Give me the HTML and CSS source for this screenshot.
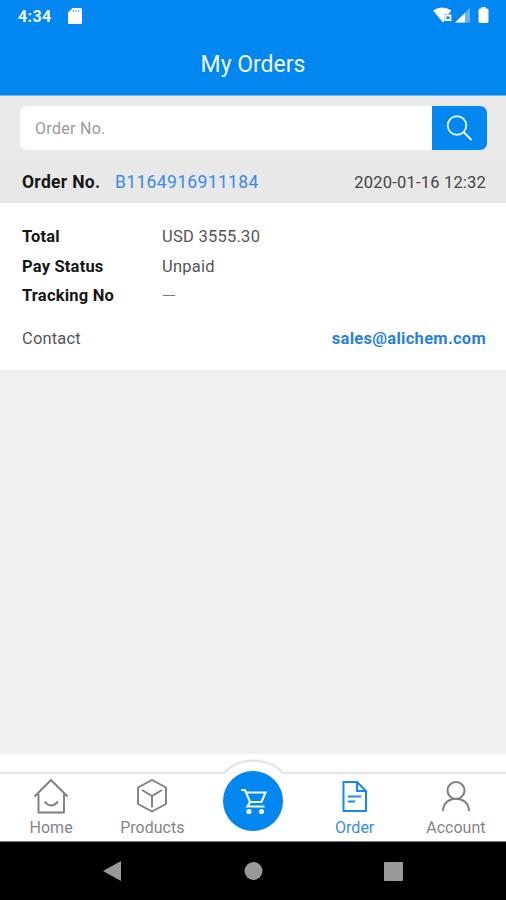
FILE: index.html
```
<!DOCTYPE html>
<html lang="en">
<head>
<meta charset="utf-8">
<title>My Orders</title>
<link rel="stylesheet" href="styles.css">
</head>
<body>
<div class="app">
  <header class="header">
    <div class="status">
      <span class="time">4:34</span>
      <svg class="sd" width="14" height="16" viewBox="0 0 14 16"><path d="M4.5 0H12.5Q14 0 14 1.5V14.5Q14 16 12.500 16H1.500Q0 16 0 14.500V4.500Z" fill="#fff"/><path d="M5.500 2V4M8 2V4M10.500 2V4" stroke="#58aef5" stroke-width="1.200"/></svg>
      <svg class="signals" width="58" height="18" viewBox="0 0 58 18"><path d="M0 3.500Q9-2.500 18.500 3.500L15 7.500H11.500V14L10 15.500Z" fill="#fff"/><path d="M12.500 8V13H17.500M13.500 8.500H17.500V14" fill="none" stroke="#fff" stroke-width="1.800"/><path d="M22 15.500L37 1V15.500Z" fill="#61b4f7"/><path d="M22 15.500L32 6V15.500Z" fill="#fff"/><path d="M48.500 0H52.500V1.500H54Q55.500 1.500 55.500 3V14.500Q55.500 16 54 16H47Q45.500 16 45.500 14.500V3Q45.500 1.500 47 1.500H48.500Z" fill="#fff"/></svg>
    </div>
    <h1 class="title">My Orders</h1>
  </header>
  <div class="search">
    <div class="field">Order No.</div>
    <button class="go" aria-label="Search"><svg width="28" height="28" viewBox="0 0 28 28" fill="none" stroke="#e4f4ff" stroke-width="1.900"><circle cx="11" cy="11.500" r="9.300"/><path d="M17.500 18L25.500 26"/></svg></button>
  </div>
  <div class="order-bar">
    <b class="label">Order No.</b><span class="number">B1164916911184</span><span class="date">2020-01-16 12:32</span>
  </div>
  <section class="details">
    <div class="row"><b>Total</b><span class="total">USD 3555.30</span></div>
    <div class="row"><b>Pay Status</b><span>Unpaid</span></div>
    <div class="row"><b>Tracking No</b><i class="dash"></i></div>
    <div class="contact"><span>Contact</span><b class="mail">sales@alichem.com</b></div>
  </section>
  <main class="empty"></main>
  <nav class="tabs">
    <svg class="edge" width="506" height="24" viewBox="0 0 506 24"><path d="M0 19H224C239 2.500 268 2.500 283 19H506" fill="none" stroke="#e5e5e5" stroke-width="2.500"/></svg>
    <div class="tab"><svg width="36" height="36" viewBox="0 0 36 36" fill="none" stroke="#7f7f7f" stroke-width="1.900" stroke-linejoin="round"><path d="M1.500 18.500L18 2L34.500 18.500M5.500 16V34.500H31V16"/><path d="M11.500 23.500Q18 31.500 25 23.500"/></svg><span>Home</span></div>
    <div class="tab"><svg width="36" height="36" viewBox="0 0 36 36" fill="none" stroke="#7f7f7f" stroke-width="1.900" stroke-linejoin="round"><path d="M18 2L32 9.500V26L18 33.500L4 26V9.500Z"/><path d="M8 12L18 18L28 12M18 18V29.500"/></svg><span>Products</span></div>
    <div class="tab"><div class="cart"><svg width="28" height="28" viewBox="0 0 28 28" fill="none" stroke="#f1faff" stroke-width="2.200"><path d="M2 3H6L11 15H22.500L26.500 5.500H7.500M11 15L8.500 19.500H25.500"/><circle cx="10" cy="24.500" r="2.600" fill="#f1faff" stroke="none"/><circle cx="22.500" cy="24.500" r="2.600" fill="#f1faff" stroke="none"/></svg></div></div>
    <div class="tab active"><svg width="36" height="36" viewBox="0 0 36 36" fill="none" stroke="#1688ee" stroke-width="2" stroke-linejoin="round"><path d="M6.500 4H20L29 13V33H6.500Z"/><path d="M20 4V13H29M11 18.500H24M11 23.500H18"/></svg><span>Order</span></div>
    <div class="tab"><svg width="36" height="36" viewBox="0 0 36 36" fill="none" stroke="#7f7f7f" stroke-width="2"><circle cx="18" cy="12.500" r="8.500"/><path d="M5 33C5 16.500 31 16.500 31 33"/></svg><span>Account</span></div>
  </nav>
  <footer class="system">
    <svg width="506" height="58" viewBox="0 0 506 58" fill="#999"><path d="M103 29L121 19V39Z"/><circle cx="253.500" cy="29" r="9"/><rect x="384" y="20" width="19" height="19" rx="1"/></svg>
  </footer>
</div>
</body>
</html>
```
FILE: styles.css
```
* { box-sizing: border-box; }
body { margin: 0; font-family: Roboto, "Liberation Sans", sans-serif; font-size: 16px; color: #444; }
.app { width: 506px; height: 900px; display: flex; flex-direction: column; background: #f0f0f0; overflow: hidden; }
.header { height: 96px; flex: none; background: #0286f0; border-bottom: 1px solid #69b7f5; color: #fff; }
.status { height: 32px; display: flex; align-items: center; padding: 0 15px 0 18px; }
.time { font-size: 16px; font-weight: 700; width: 50px; color: #f0faff; letter-spacing: .4px; }
.signals { margin-left: auto; }
.title { margin: 16px 0 0; text-align: center; font-size: 23px; line-height: 34px; font-weight: 400; color: #edf9ff; }
.search { height: 66px; flex: none; display: flex; padding: 10px 19px 12px 20px; background: #eae9e9; }
.field { flex: 1; background: #fff; border-radius: 7px 0 0 7px; padding-left: 15px; line-height: 45px; color: #999; letter-spacing: .3px; }
.go { width: 55px; border: 0; padding: 0; background: #0286f0; border-radius: 0 7px 7px 0; display: flex; align-items: center; justify-content: center; }
.order-bar { height: 41px; flex: none; background: #e8e8e8; display: flex; align-items: center; padding: 0 20px 2px 22px; }
.label { width: 93px; color: #161616; font-size: 17.500px; letter-spacing: .3px; }
.number { color: #398bea; font-size: 17.500px; letter-spacing: .35px; }
.date { margin-left: auto; margin-top: 1px; color: #444; font-size: 16.500px; letter-spacing: .2px; }
.details { height: 167px; flex: none; background: #fff; padding: 19px 20px 0 22px; }
.row { height: 29.500px; display: flex; align-items: center; }
.row b { width: 140px; color: #161616; font-size: 16.500px; letter-spacing: .2px; }
.row span { color: #555; font-size: 16.500px; letter-spacing: .25px; }
.dash { width: 12px; height: 1px; margin-left: 1px; background: #777; }
.contact { display: flex; justify-content: space-between; align-items: center; height: 29px; margin-top: 13px; color: #555; font-size: 16.500px; letter-spacing: .15px; }
.mail { color: #287fe0; letter-spacing: .28px; }
.empty { flex: 1; }
.tabs { height: 88px; flex: none; background: #fff; display: grid; grid-template-columns: repeat(5, 1fr); border-bottom: 1px solid #777; position: relative; }
.edge { position: absolute; left: 0; top: 0; }
.tab { padding: 24px 0 0 1px; display: flex; flex-direction: column; align-items: center; color: #858585; }
.tab span { line-height: 20px; margin-top: 4px; }
.tab.active { color: #398bea; }
.cart { margin-top: -7px; width: 60px; height: 60px; flex: none; border-radius: 50%; background: #0286f0; display: flex; align-items: center; justify-content: center; }
.system { height: 58px; flex: none; background: #000; }
.system svg { display: block; }
```
